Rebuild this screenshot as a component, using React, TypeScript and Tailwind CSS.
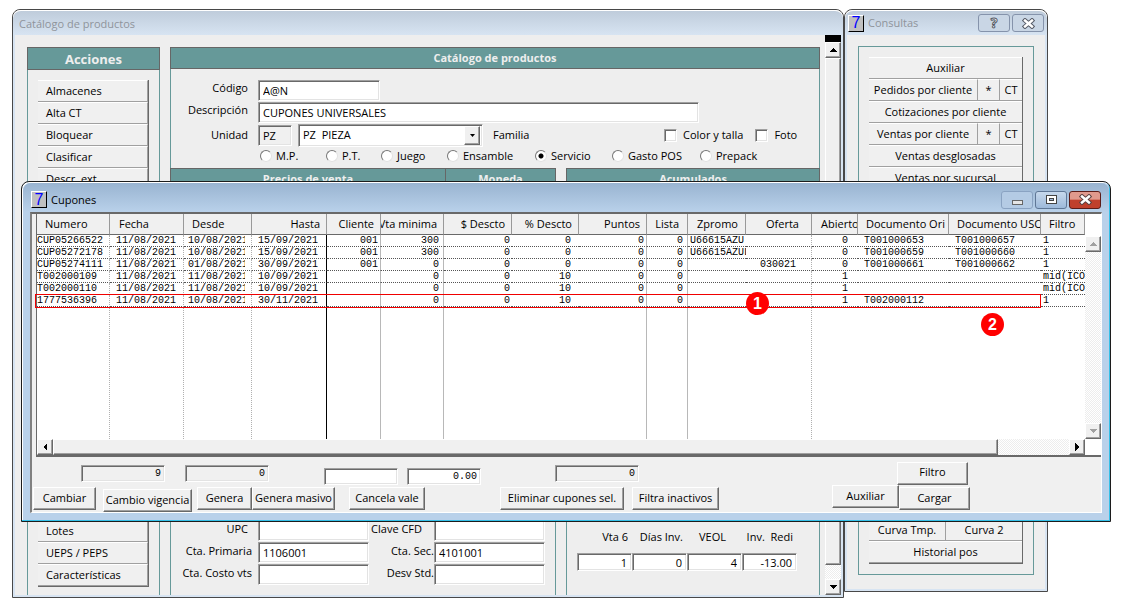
import { ReactNode } from "react";
import clsx from "clsx";

const raised =
  "border border-t-white border-l-white border-r-[#696969] border-b-[#696969] bg-[#f0f0f0] shadow-[inset_-1px_-1px_0_#a0a0a0]";
const sunken =
  "border border-t-[#a0a0a0] border-l-[#a0a0a0] border-r-white border-b-white shadow-[inset_1px_1px_0_#696969,inset_-1px_-1px_0_#e3e3e3]";
const track =
  "bg-[repeating-conic-gradient(#fff_0_25%,#ededed_0_50%)] bg-[length:2px_2px]";
const gridFont = "font-['Liberation_Mono',monospace] text-[10px]";

type Column = {
  title: string;
  width: string;
  head?: string;
  cell: string;
  line?: string;
};

const dotted = "border-r [border-right-style:dotted] border-r-[#b0b0b0]";
const solid = "border-r border-r-[#b8b8b8]";

const columns: Column[] = [
  { title: "Numero", width: "w-[73px]", head: "pl-2", cell: "", line: dotted },
  { title: "Fecha", width: "w-[74px]", head: "pl-[9px]", cell: "pl-1.5", line: dotted },
  { title: "Desde", width: "w-[68px]", head: "pl-2", cell: "pl-1 pr-1.5", line: dotted },
  { title: "Hasta", width: "w-[75px]", head: "justify-end pr-1.5", cell: "text-right pr-2", line: "border-r border-r-black" },
  { title: "Cliente", width: "w-[54px]", head: "justify-end pr-1.5", cell: "text-right pr-0.5", line: solid },
  { title: "Vta minima", width: "w-[63px]", head: "justify-end pr-1.5", cell: "text-right pr-1", line: solid },
  { title: "$ Descto", width: "w-[68px]", head: "justify-end pr-1.5", cell: "text-right pr-0.5" },
  { title: "% Descto", width: "w-[67px]", head: "justify-end pr-1.5", cell: "text-right pr-2" },
  { title: "Puntos", width: "w-[68px]", head: "justify-end pr-1.5", cell: "text-right pr-0.5", line: solid },
  { title: "Lista", width: "w-[41px]", head: "justify-end pr-2", cell: "text-right pr-1", line: solid },
  { title: "Zpromo", width: "w-[58px]", head: "pl-[9px]", cell: "pl-0.5" },
  { title: "Oferta", width: "w-[66px]", head: "pl-5", cell: "pl-3.5", line: dotted },
  { title: "Abierto", width: "w-[46px]", head: "pl-[9px]", cell: "text-right pr-2.5" },
  { title: "Documento Ori", width: "w-[91px]", head: "pl-2", cell: "pl-1.5" },
  { title: "Documento USO", width: "w-[92px]", head: "pl-2", cell: "pl-1.5" },
  { title: "Filtro", width: "w-auto", head: "pl-2", cell: "pl-0.5" },
];

const coupons = [
  ["CUP05266522", "11/08/2021", "10/08/2021", "15/09/2021", "001", "300", "0", "0", "0", "0", "U66615AZU", "", "0", "T001000653", "T001000657", "1"],
  ["CUP05272178", "11/08/2021", "10/08/2021", "15/09/2021", "001", "300", "0", "0", "0", "0", "U66615AZUL", "", "0", "T001000659", "T001000660", "1"],
  ["CUP05274111", "11/08/2021", "01/08/2021", "30/09/2021", "001", "0", "0", "0", "0", "0", "", "030021", "0", "T001000661", "T001000662", "1"],
  ["T002000109", "11/08/2021", "11/08/2021", "10/09/2021", "", "0", "0", "10", "0", "0", "", "", "1", "", "", "mid(ICO"],
  ["T002000110", "11/08/2021", "11/08/2021", "10/09/2021", "", "0", "0", "10", "0", "0", "", "", "1", "", "", "mid(ICO"],
  ["1777536396", "11/08/2021", "10/08/2021", "30/11/2021", "", "0", "0", "10", "0", "0", "", "", "1", "T002000112", "", "1"],
];

const productTypes = [
  { label: "M.P.", width: "w-[66px]" },
  { label: "P.T.", width: "w-[55px]" },
  { label: "Juego", width: "w-[66px]" },
  { label: "Ensamble", width: "w-[88px]" },
  { label: "Servicio", width: "w-[77px]" },
  { label: "Gasto POS", width: "w-[88px]" },
  { label: "Prepack", width: "w-[80px]" },
];

const Arrow = ({ dir, color = "#000" }: { dir: "up" | "down" | "left" | "right"; color?: string }) => {
  const points = {
    up: "4,2 8,6 0,6",
    down: "0,2 8,2 4,6",
    left: "6,0 6,8 2,4",
    right: "2,0 6,4 2,8",
  };
  return (
    <svg width="8" height="8" viewBox="0 0 8 8" shapeRendering="crispEdges">
      <polygon points={points[dir]} fill={color} />
    </svg>
  );
};

const ScrollButton = ({ dir, label, color }: { dir: "up" | "down" | "left" | "right"; label: string; color?: string }) => (
  <button
    aria-label={label}
    className={clsx("flex h-4 w-4 shrink-0 items-center justify-center", raised)}
  >
    <Arrow dir={dir} color={color} />
  </button>
);

const AppIcon = () => (
  <span className="flex h-[17px] w-4 shrink-0 items-center justify-center border border-t-white border-l-white border-r-black border-b-black bg-[#c0c0c0] font-['Liberation_Sans',sans-serif] text-[16px] leading-4 text-[#0000ff]">
    7
  </span>
);

const CloseIcon = ({ stroke }: { stroke: string }) => (
  <svg width="13" height="11" viewBox="0 0 13 11">
    <path d="M3 2.5 L10 8.5 M10 2.5 L3 8.5" stroke={stroke} strokeWidth="4.4" strokeLinecap="square" />
    <path d="M3 2.5 L10 8.5 M10 2.5 L3 8.5" stroke="#fff" strokeWidth="2.4" strokeLinecap="square" />
  </svg>
);

const ListButton = ({ children, className }: { children: ReactNode; className?: string }) => (
  <button
    className={clsx(
      "h-[22px] border-t border-b border-t-white border-b-[#a0a0a0] bg-[#f0f0f0] whitespace-nowrap",
      className
    )}
  >
    {children}
  </button>
);

const PushButton = ({ children, className }: { children: ReactNode; className?: string }) => (
  <button className={clsx("h-[23px] shrink-0 pb-0.5 text-center whitespace-nowrap", raised, className)}>
    {children}
  </button>
);

const Field = ({
  id,
  label,
  labelClass,
  value,
  inputClass,
}: {
  id: string;
  label: string;
  labelClass: string;
  value?: string;
  inputClass: string;
}) => (
  <>
    <label htmlFor={id} className={clsx("shrink-0 pb-1 text-right whitespace-nowrap", labelClass)}>
      {label}
    </label>
    <input
      id={id}
      defaultValue={value}
      className={clsx("h-[21px] shrink-0 px-1 outline-none", sunken, inputClass)}
    />
  </>
);

const Catalogo = () => (
  <section className="flex min-w-0 flex-1 flex-col rounded-t-lg border border-[#484848] bg-[#f0f0f0]">
    <header className="flex h-[25px] items-center rounded-t-lg border-t border-t-white bg-linear-to-b from-[#bfccdb] to-[#d7e4f2] px-1.5 pt-0.5 text-[#8f949b]">
      Catálogo de productos
    </header>
    <div className="flex flex-1 border-2 border-t-0 border-[#d7e4f2] bg-[#eeeeee] pl-3">
      {/* Acciones */}
      <aside className="mt-3 mr-[10px] flex w-[133px] shrink-0 flex-col border-x border-[#669999]">
        <h2 className="-mx-px h-[23px] border border-[#666] bg-[#669999] text-center text-[13px] leading-[22px] font-bold text-[#eee]">
          Acciones
        </h2>
        <nav className="mx-2.5 mt-2.5 mb-2 flex flex-col border-r border-b border-[#696969]">
          {["Almacenes", "Alta CT", "Bloquear", "Clasificar", "Descr. ext"].map((name) => (
            <ListButton key={name} className="border-r border-r-[#a0a0a0] pl-2 text-left">
              {name}
            </ListButton>
          ))}
          <div className="h-[330px]" />
          {["Lotes", "UEPS / PEPS", "Características"].map((name) => (
            <ListButton key={name} className="border-r border-r-[#a0a0a0] pl-2 text-left">
              {name}
            </ListButton>
          ))}
        </nav>
      </aside>

      {/* Ficha del producto */}
      <main className="mt-3 flex min-w-0 flex-1 flex-col">
        <h1 className="h-[22px] border border-[#666] bg-[#669999] text-center leading-5 font-bold text-[#eee]">
          Catálogo de productos
        </h1>
        <form className="flex h-[99px] flex-col border-x border-[#669999] pt-2.5">
          <div className="flex h-[22px] items-center">
            <Field id="codigo" label="Código" value="A@N" labelClass="mr-2.5 w-[77px]" inputClass="w-[122px] bg-white" />
          </div>
          <div className="flex h-[22px] items-center">
            <Field
              id="descripcion"
              label="Descripción"
              value="CUPONES UNIVERSALES"
              labelClass="mr-2.5 w-[77px]"
              inputClass="w-[441px] bg-white"
            />
          </div>
          <div className="flex h-6 items-center">
            <label htmlFor="unidad" className="mr-2.5 w-[77px] text-right">
              Unidad
            </label>
            <input
              id="unidad"
              defaultValue="PZ"
              className={clsx("h-[21px] w-[34px] bg-[#f0f0f0] px-1 outline-none", sunken)}
            />
            <div className={clsx("ml-1.5 flex h-[23px] w-[185px] items-center bg-white p-0.5", sunken)}>
              <select aria-label="Nombre de la unidad" className="min-w-0 flex-1 appearance-none bg-transparent px-0.5 outline-none">
                <option>PZ&nbsp; PIEZA</option>
              </select>
              <span className={clsx("flex h-[19px] w-4 items-center justify-center", raised)}>
                <svg width="5" height="3" viewBox="0 0 5 3">
                  <path d="M0 0h5L2.5 3z" />
                </svg>
              </span>
            </div>
            <span className="ml-2.5 w-[171px]">Familia</span>
            {["Color y talla", "Foto"].map((name) => (
              <label key={name} className="mr-3 flex items-center gap-1.5 whitespace-nowrap">
                <input type="checkbox" className={clsx("h-[13px] w-[13px] appearance-none bg-white", sunken)} />
                {name}
              </label>
            ))}
          </div>
          <div className="flex h-[18px] items-center pl-[89px]">
            {productTypes.map(({ label, width }) => (
              <label key={label} className={clsx("flex shrink-0 items-center gap-1 whitespace-nowrap", width)}>
                <input
                  type="radio"
                  name="tipo"
                  defaultChecked={label === "Servicio"}
                  className="h-3 w-3 appearance-none rounded-full border border-t-[#777] border-l-[#777] border-r-[#e3e3e3] border-b-[#e3e3e3] bg-white checked:bg-[radial-gradient(circle,#000_2px,#fff_3px)]"
                />
                {label}
              </label>
            ))}
          </div>
        </form>

        <div className="flex flex-1">
          <section className="flex w-[386px] shrink-0 flex-col border-x border-[#669999]">
            <div className="-mx-px flex h-[22px] border border-[#666] bg-[#669999] text-center leading-5 font-bold text-[#eee]">
              <h2 className="flex-1 border-r border-[#666]">Precios de venta</h2>
              <h2 className="w-[109px]">Moneda</h2>
            </div>
            <div className="mt-auto mb-2.5 flex flex-col gap-px">
              <div className="flex items-center">
                <Field id="upc" label="UPC" labelClass="mr-2.5 w-[77px]" inputClass="w-[111px] bg-white" />
                <Field id="cfd" label="Clave CFD" labelClass="mr-3 w-[53px]" inputClass="w-[111px] bg-white" />
              </div>
              <div className="flex items-center">
                <Field id="primaria" label="Cta. Primaria" value="1106001" labelClass="mr-1.5 w-[81px]" inputClass="w-[111px] bg-white" />
                <Field id="sec" label="Cta. Sec." value="4101001" labelClass="w-[65px]" inputClass="w-[111px] bg-white" />
              </div>
              <div className="flex items-center">
                <Field id="costo" label="Cta. Costo vts" labelClass="mr-1.5 w-[81px]" inputClass="w-[111px] bg-white" />
                <Field id="desv" label="Desv Std." labelClass="w-[65px]" inputClass="w-[111px] bg-white" />
              </div>
            </div>
          </section>
          <section className="ml-2.5 flex flex-1 flex-col border-x border-[#669999]">
            <h2 className="-mx-px h-[22px] border border-[#666] bg-[#669999] text-center leading-5 font-bold text-[#eee]">
              Acumulados
            </h2>
            <div className="mt-auto mb-6 ml-2.5 flex">
              {[
                ["Vta 6", "1"],
                ["Días Inv.", "0"],
                ["VEOL", "4"],
                ["Inv.  Redi", "-13.00"],
              ].map(([name, value]) => (
                <label key={name} className="flex w-[55px] flex-col gap-2 text-right whitespace-pre">
                  <span className={name === "VEOL" ? "pr-4" : "pr-1"}>{name}</span>
                  <input
                    defaultValue={value}
                    className={clsx("h-[18px] w-[55px] bg-white px-1 text-right outline-none", sunken)}
                  />
                </label>
              ))}
            </div>
          </section>
        </div>
      </main>

      <div className={clsx("ml-[5px] flex w-4 flex-col", track)}>
        <div className="h-[7px] bg-black" />
        <ScrollButton dir="up" label="Subir" />
        <div className={clsx("flex-1", raised)} />
        <div className="h-3.5" />
        <ScrollButton dir="down" label="Bajar" />
      </div>
    </div>
  </section>
);

const Consultas = () => (
  <section className="flex w-[204px] shrink-0 flex-col rounded-t-lg border border-[#484848] bg-[#f0f0f0]">
    <header className="flex h-[25px] items-center gap-1 rounded-t-lg border-t border-t-white bg-linear-to-b from-[#bfccdb] to-[#d7e4f2] px-[3px] text-[#8f949b]">
      <AppIcon />
      <span className="flex-1">Consultas</span>
      <div className="flex gap-0.5">
        <button
          aria-label="Ayuda"
          className="h-[18px] w-8 rounded-[3px] border border-[#8593ab] bg-[#c9d6e5] text-[14px] leading-4 font-bold text-white [-webkit-text-stroke:1px_#555a66]"
        >
          ?
        </button>
        <button
          aria-label="Cerrar Consultas"
          className="flex h-[18px] w-8 items-center justify-center rounded-[3px] border border-[#8593ab] bg-[#c9d6e5]"
        >
          <CloseIcon stroke="#555a66" />
        </button>
      </div>
    </header>
    <div className="border-2 border-t-0 border-[#d7e4f2] bg-[#eeeeee] px-[11px] pt-[11px] pb-3.5">
      <div className="border border-[#669999] p-2.5">
        <div className="flex flex-col border-r border-b border-[#696969] bg-[#f0f0f0]">
          <ListButton>Auxiliar</ListButton>
          <div className="flex">
            <ListButton className="w-[109px] border-r border-r-[#a0a0a0]">Pedidos por cliente</ListButton>
            <ListButton className="w-[22px] border-r border-r-[#a0a0a0]">*</ListButton>
            <ListButton className="flex-1">CT</ListButton>
          </div>
          <ListButton>Cotizaciones por cliente</ListButton>
          <div className="flex">
            <ListButton className="w-[109px] border-r border-r-[#a0a0a0]">Ventas por cliente</ListButton>
            <ListButton className="w-[22px] border-r border-r-[#a0a0a0]">*</ListButton>
            <ListButton className="flex-1">CT</ListButton>
          </div>
          <ListButton>Ventas desglosadas</ListButton>
          <ListButton>Ventas por sucursal</ListButton>
          <div className="h-[330px]" />
          <div className="flex">
            <ListButton className="flex-1 border-r border-r-[#a0a0a0]">Curva Tmp.</ListButton>
            <ListButton className="flex-1">Curva 2</ListButton>
          </div>
          <ListButton>Historial pos</ListButton>
        </div>
      </div>
    </div>
  </section>
);

const CouponTable = () => (
  <div className="relative ml-1 border-b-2 border-l border-[#696969] bg-white">
    <div className="flex h-[225px]">
      <table className="h-full w-full min-w-0 flex-1 table-fixed border-separate border-spacing-0">
        <colgroup>
          {columns.map(({ title, width }) => (
            <col key={title} className={width} />
          ))}
        </colgroup>
        <thead>
          <tr className="h-[21px]">
            {columns.map(({ title, head }) => (
              <th
                key={title}
                className="overflow-hidden border-r border-b border-r-[#999] border-b-[#696969] bg-[#f0f0f0] p-0 font-normal"
              >
                <div className={clsx("flex overflow-hidden leading-5 whitespace-nowrap", head)}>{title}</div>
              </th>
            ))}
          </tr>
        </thead>
        <tbody className={gridFont}>
          {coupons.map((row) => (
            <tr key={row[0]} className="h-3">
              {row.map((value, i) => (
                <td
                  key={i}
                  className={clsx("h-3 border-b border-b-[#555] p-0 [border-bottom-style:dotted]", columns[i].line)}
                >
                  <div className={clsx("h-[11px] leading-[11px] whitespace-nowrap", columns[i].cell)}>
                    <div className="overflow-hidden">{value}</div>
                  </div>
                </td>
              ))}
            </tr>
          ))}
          <tr>
            {columns.map(({ title, line }) => (
              <td key={title} className={clsx("p-0", line)} />
            ))}
          </tr>
        </tbody>
      </table>
      <div className={clsx("mt-[22px] flex w-4 flex-col justify-between", track)}>
        <ScrollButton dir="up" label="Fila anterior" color="#a0a0a0" />
        <ScrollButton dir="down" label="Fila siguiente" color="#a0a0a0" />
      </div>
    </div>
    <div className="flex h-4">
      <div className={clsx("flex flex-1", track)}>
        <ScrollButton dir="left" label="Izquierda" />
        <div className={clsx("mr-[71px] flex-1", raised)} />
        <ScrollButton dir="right" label="Derecha" />
      </div>
      <div className="w-4" />
    </div>

    {/* selected coupon and callouts */}
    <div className="absolute top-20 right-[60px] -left-0.5 h-3.5 border border-[#f00000]" />
    <Callout className="top-[78px] left-[709px]">1</Callout>
    <Callout className="top-[99px] left-[944px]">2</Callout>
  </div>
);

const Callout = ({ children, className }: { children: ReactNode; className: string }) => (
  <span
    className={clsx(
      "absolute flex h-[23px] w-[23px] items-center justify-center rounded-full bg-[#ff0000] font-['Liberation_Sans',sans-serif] text-[16px] font-bold text-white",
      className
    )}
  >
    {children}
  </span>
);

const Cupones = () => {
  const total = clsx("h-[17px] shrink-0 px-[3px] text-right outline-none", gridFont, sunken);
  return (
    <section className="absolute top-[181px] right-3 left-[21px] rounded-t-lg border border-[#1c1c1c] bg-[#b9d1ea] shadow-[inset_-1px_-1px_0_#35c0e8,inset_1px_1px_0_#fff]">
      <header className="mx-px mt-px flex h-[29px] items-center gap-1 rounded-t-lg bg-linear-to-b from-[#99b4d1] to-[#b9d1ea] px-2 pt-1">
        <AppIcon />
        <h2 className="flex-1">Cupones</h2>
        <div className="flex gap-0.5">
          <button
            aria-label="Minimizar"
            className="flex h-[18px] w-8 items-end justify-center rounded-[3px] border border-[#8aa3c2] bg-[#b4cbe4] pb-[3px]"
          >
            <span className="h-[5px] w-[11px] border border-[#666] bg-[#e6e6e6]" />
          </button>
          <button
            aria-label="Maximizar"
            className="flex h-[18px] w-8 items-center justify-center rounded-[3px] border border-[#5f7796] bg-linear-to-b from-[#c6d8ec] to-[#9db9da]"
          >
            <span className="flex h-[9px] w-[11px] items-center justify-center border border-[#444] bg-white">
              <span className="h-[3px] w-[5px] border border-[#444] bg-[#9db9da]" />
            </span>
          </button>
          <button
            aria-label="Cerrar Cupones"
            className="flex h-[18px] w-8 items-center justify-center rounded-[3px] border border-[#5c1c18] bg-linear-to-b from-[#e0998d] from-45% to-[#c0402c] to-50%"
          >
            <CloseIcon stroke="#5a4040" />
          </button>
        </div>
      </header>
      <div className="mx-2 mb-2 border-t-2 border-r border-b border-l-2 border-t-[#696969] border-r-white border-b-white border-l-[#808080] bg-[#f0f0f0]">
        <CouponTable />
        <div className="mt-1 flex h-6 items-center">
          <input aria-label="Cupones" defaultValue="9" className={clsx("ml-[49px] w-[84px]", total)} />
          <input aria-label="Seleccionados" defaultValue="0" className={clsx("ml-5 w-[84px]", total)} />
          <input aria-label="Vale" className={clsx("ml-[55px] w-[74px] self-end bg-white", total)} />
          <input aria-label="Importe" defaultValue="0.00" className={clsx("ml-[9px] w-[74px] self-end bg-white", total)} />
          <input aria-label="Usados" defaultValue="0" className={clsx("ml-[74px] w-[84px]", total)} />
          <PushButton className="ml-[258px] w-[71px]">Filtro</PushButton>
        </div>
        <div className="flex h-[27px] items-center pl-px">
          <PushButton className="w-[63px]">Cambiar</PushButton>
          <PushButton className="ml-[7px] w-[89px] self-end">Cambio vigencia</PushButton>
          <PushButton className="ml-[5px] w-[55px]">Genera</PushButton>
          <PushButton className="w-[83px]">Genera masivo</PushButton>
          <PushButton className="ml-3.5 w-[76px]">Cancela vale</PushButton>
          <PushButton className="ml-[75px] w-[124px]">Eliminar cupones sel.</PushButton>
          <PushButton className="ml-2 w-[87px]">Filtra inactivos</PushButton>
          <PushButton className="ml-[113px] w-[67px] self-start">Auxiliar</PushButton>
          <PushButton className="w-[71px]">Cargar</PushButton>
        </div>
      </div>
    </section>
  );
};

const App = () => (
  <div className="relative min-h-screen bg-white pt-[9px] pr-[75px] pl-3 font-['Open_Sans',sans-serif] text-[11px] leading-4 text-black">
    <div className="flex items-start">
      <Catalogo />
      <Consultas />
    </div>
    <Cupones />
  </div>
);

export default App;
